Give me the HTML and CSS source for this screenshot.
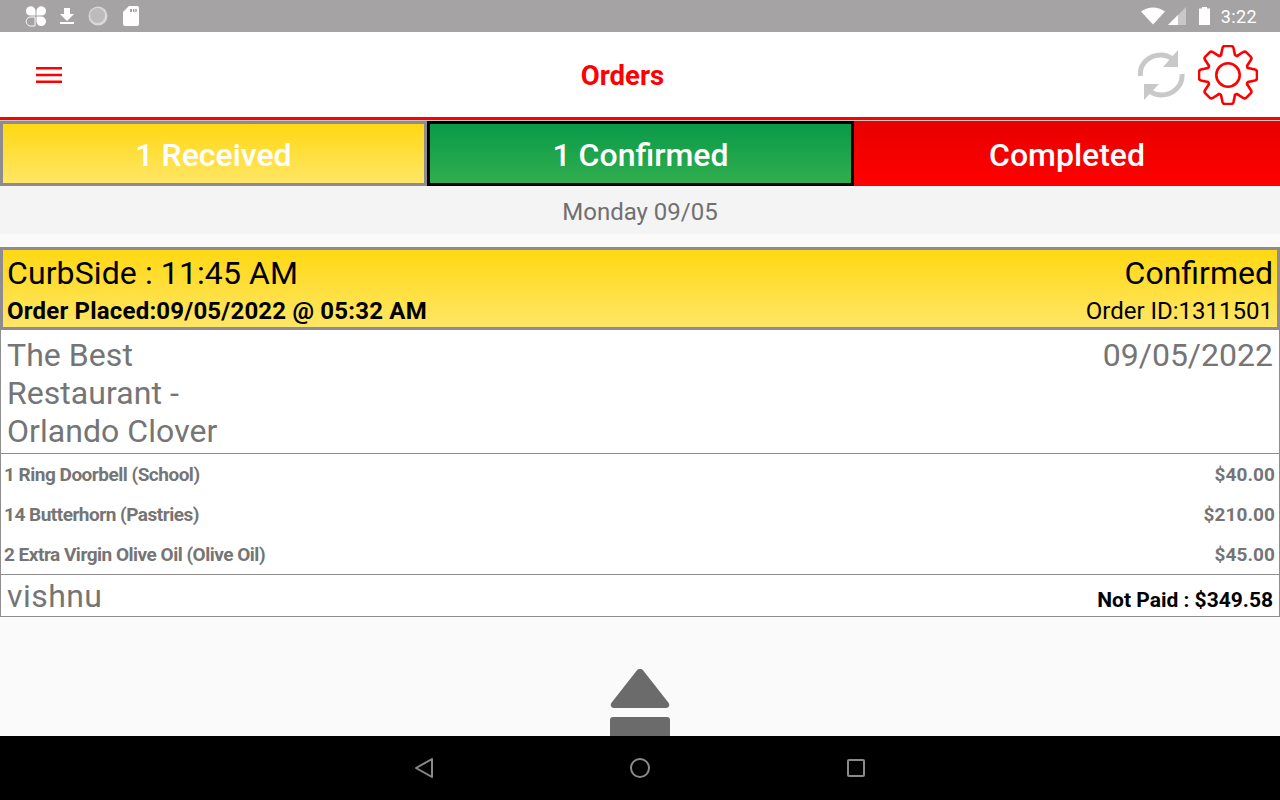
FILE: index.html
```html
<!DOCTYPE html>
<html lang="en">
<head>
<meta charset="utf-8">
<title>Orders</title>
<link rel="stylesheet" href="styles.css">
</head>
<body>
<div class="app">
  <div class="statusbar">
    <div class="status-left">
      <svg width="21" height="21" viewBox="0 0 22 22"><path fill="#fff" d="M1 5.500a5 5 0 0 1 10-.5v5H6a5 5 0 0 1-5-4.500zM12 5a5 5 0 0 1 10 .5 5 5 0 0 1-5 4.500h-5zM12 11h5a5 5 0 0 1 0 10 5 5 0 0 1-5-5z"/><path fill="none" stroke="#fff" stroke-width="1" d="M10.500 11.500v9.500H6a4.700 4.700 0 0 1 0-9.500z"/></svg>
      <svg width="16" height="18" viewBox="0 0 16 18"><path fill="#fff" d="M5 1h6v6h4l-7 7-7-7h4zM1 15h14v2H1z"/></svg>
      <svg width="20" height="20" viewBox="0 0 20 20"><circle cx="10" cy="10" r="9.500" fill="#d8d8d8"/><circle cx="9.500" cy="9.500" r="7.500" fill="#bdbbbc"/></svg>
      <svg class="sd" width="16" height="20" viewBox="0 0 16 20"><path fill="#fff" d="M6 0h8a2 2 0 0 1 2 2v16a2 2 0 0 1-2 2H2a2 2 0 0 1-2-2V6z"/><path fill="#a5a3a4" d="M7 3h2v3H7zM10 3h1.500v3H10zM12.300 3h1.500v3h-1.500z"/></svg>
    </div>
    <div class="status-right">
      <svg width="24" height="18" viewBox="0 0 24 18"><path fill="#fff" d="M0 4.500Q12-3.500 24 4.500L12 17.500z"/></svg>
      <svg class="signal" width="20" height="20" viewBox="0 0 20 20"><path fill="#c9c8c8" d="M19 1v18H1z"/><path fill="#fff" d="M11 9v10H1z"/></svg>
      <svg class="battery" width="11" height="18" viewBox="0 0 11 18"><path fill="#fff" d="M3 0h5v1.500h3V18H0V1.500h3z"/></svg>
      <span class="clock">3:22</span>
    </div>
  </div>

  <header class="appbar">
    <button class="menu" aria-label="Menu">
      <svg width="26" height="18" viewBox="0 0 26 18"><path fill="#f00" d="M0 1h26v2.500H0zM0 7.700h26v2.500H0zM0 14.500h26V17H0z"/></svg>
    </button>
    <h1 class="title">Orders</h1>
    <div class="actions">
      <svg class="sync" width="48" height="52" viewBox="0 0 48 52"><g fill="none" stroke="#c8c8c8" stroke-width="5"><path d="M3.500 27C2 15 12 6 24 6c5 0 8 1.500 11 3.500"/><path d="M45 25c1 12-9 21-21 21-5 0-8-1.500-11-3.500"/></g><path fill="#c8c8c8" d="M41 1v17H26zM7 51V35h15z"/></svg>
      <svg class="gear" width="60" height="60" viewBox="0 0 60 60">
        <defs><path id="tooth" d="M23 10L24.500 3Q25 1 27 1L33 1Q35 1 35.500 3L37 10Q38 11.200 39.190 10.910"/></defs>
        <g fill="none" stroke="#f00" stroke-width="2.600" stroke-linecap="round">
          <circle cx="30" cy="30" r="11.700"/>
          <use href="#tooth"/>
          <use href="#tooth" transform="rotate(45 30 30)"/>
          <use href="#tooth" transform="rotate(90 30 30)"/>
          <use href="#tooth" transform="rotate(135 30 30)"/>
          <use href="#tooth" transform="rotate(180 30 30)"/>
          <use href="#tooth" transform="rotate(225 30 30)"/>
          <use href="#tooth" transform="rotate(270 30 30)"/>
          <use href="#tooth" transform="rotate(315 30 30)"/>
        </g>
      </svg>
    </div>
  </header>

  <nav class="tabs">
    <div class="tab tab-received">1 Received</div>
    <div class="tab tab-confirmed">1 Confirmed</div>
    <div class="tab tab-completed">Completed</div>
  </nav>

  <main class="content">
    <div class="date">Monday 09/05</div>
    <article class="order">
      <div class="order-head">
        <div class="line big"><span>CurbSide : 11:45 AM</span><span class="state">Confirmed</span></div>
        <div class="line small"><strong>Order Placed:09/05/2022 @ 05:32 AM</strong><span>Order ID:1311501</span></div>
      </div>
      <div class="order-place">
        <div class="place">The Best<br>Restaurant -<br>Orlando Clover</div>
        <div>09/05/2022</div>
      </div>
      <ul class="items">
        <li><span class="item-name">1 Ring Doorbell (School)</span><span class="price">$40.00</span></li>
        <li><span class="item-name">14 Butterhorn (Pastries)</span><span class="price">$210.00</span></li>
        <li><span class="item-name">2 Extra Virgin Olive Oil (Olive Oil)</span><span class="price">$45.00</span></li>
      </ul>
      <div class="order-foot">
        <span class="customer">vishnu</span>
        <strong class="paid">Not Paid : $349.58</strong>
      </div>
    </article>
    <div class="eject">
      <svg width="60" height="68" viewBox="0 0 60 68"><path fill="#6b6b6b" d="M26.800 1.500a4 4 0 0 1 6.400 0l25.300 32.300c1.700 2.200.5 5.200-2.500 5.200H4c-3 0-4.200-3-2.500-5.200zM3 48h54a3 3 0 0 1 3 3v17H0V51a3 3 0 0 1 3-3z"/></svg>
    </div>
  </main>

  <footer class="navbar">
    <svg width="20" height="22" viewBox="0 0 20 22"><path fill="none" stroke="#8a8a8a" stroke-width="2" stroke-linejoin="round" d="M18 2v18L2 11z"/></svg>
    <svg width="22" height="22" viewBox="0 0 22 22"><circle cx="11" cy="11" r="9" fill="none" stroke="#8a8a8a" stroke-width="2"/></svg>
    <svg width="20" height="20" viewBox="0 0 20 20"><rect x="2" y="2" width="16" height="16" rx="1" fill="none" stroke="#8a8a8a" stroke-width="2"/></svg>
  </footer>
</div>
</body>
</html>
```
FILE: styles.css
```css
* { box-sizing: border-box; }
html, body { margin: 0; padding: 0; }
body { font-family: Roboto, "Liberation Sans", sans-serif; background: #fafafa; }
.app { width: 1280px; height: 800px; display: flex; flex-direction: column; overflow: hidden; }

.statusbar { height: 32px; flex: none; background: #a5a3a4; display: flex; justify-content: space-between; align-items: center; padding: 0 23px 0 25px; }
.status-left { display: flex; align-items: center; gap: 13px; }
.sd { margin-left: 2px; }
.status-right { display: flex; align-items: center; }
.signal { margin-left: 2px; }
.battery { margin-left: 12px; }
.clock { margin-left: 11px; color: #fff; font-size: 18px; letter-spacing: .4px; }

.appbar { height: 85px; flex: none; background: #fff; display: flex; align-items: center; padding: 0 22px 0 36px; }
.menu { border: 0; background: none; padding: 0; display: flex; width: 26px; height: 18px; }
.title { flex: 1; margin: 0; padding: 2px 0 0 46px; font-size: 27.500px; font-weight: 700; color: #f00; text-align: center; }
.actions { display: flex; align-items: center; gap: 13px; }
.sync { margin-top: 1px; }
.gear { margin-top: 0; }

.tabs { height: 69px; flex: none; display: grid; grid-template-columns: 427px 427px 1fr; border-top: 3px solid #f00; background: #c4c4c4; padding-top: 1px; }
.tab { display: flex; align-items: center; justify-content: center; padding-top: 2px; color: #fff; font-size: 32px; font-weight: 500; }
.tab-received { border: 3px solid #8e8c90; background: linear-gradient(#ffd813, #ffe666); }
.tab-confirmed { border: 3px solid #000; background: linear-gradient(#0a9a4a, #30ae4e); }
.tab-completed { background: linear-gradient(#e80000, #ff0000); }

.content { flex: 1; min-height: 0; overflow: hidden; display: flex; flex-direction: column; }
.date { height: 48px; flex: none; background: #f4f4f4; color: #707070; font-size: 24px; display: flex; align-items: center; justify-content: center; padding-top: 4px; margin-bottom: 13px; }

.order { flex: none; height: 370px; background: #fff; border: 1px solid #8e8e8e; border-top: 0; display: flex; flex-direction: column; }
.order-head { height: 83px; flex: none; margin: 0 -1px; border: 3px solid #8e8c90; background: linear-gradient(#ffd813, #ffe666); padding: 4px 4px 0 4px; color: #000; }
.line { display: flex; justify-content: space-between; align-items: baseline; }
.big { font-size: 32px; line-height: 38px; letter-spacing: .1px; }
.state { letter-spacing: 0; }
.small { font-size: 24px; line-height: 32px; margin-top: 3px; }
.small strong { font-weight: 700; letter-spacing: .2px; }
.order-place { height: 124px; flex: none; display: flex; justify-content: space-between; padding: 6px 6px 0 6px; color: #757575; font-size: 32px; line-height: 38px; border-bottom: 1px solid #8e8e8e; }
.place { letter-spacing: .05px; }
.items { height: 121px; flex: none; margin: 0; padding: 0 4px 0 3px; list-style: none; color: #757575; font-size: 19px; font-weight: 700; border-bottom: 1px solid #8e8e8e; }
.items li { height: 40px; display: flex; justify-content: space-between; align-items: center; }
.item-name { letter-spacing: -.5px; }
.price { letter-spacing: .1px; }
.order-foot { flex: 1; display: flex; justify-content: space-between; align-items: flex-end; padding: 0 6px 2px 6px; }
.customer { color: #757575; font-size: 32px; line-height: 42px; letter-spacing: .45px; margin-bottom: -3px; }
.paid { color: #000; font-size: 21px; font-weight: 700; line-height: 28px; }

.eject { flex: 1; min-height: 0; display: flex; justify-content: center; padding-top: 52px; }
.eject svg { flex: none; }

.navbar { height: 64px; flex: none; background: #000; display: flex; align-items: center; justify-content: center; gap: 195px; padding-right: 1px; }
```
